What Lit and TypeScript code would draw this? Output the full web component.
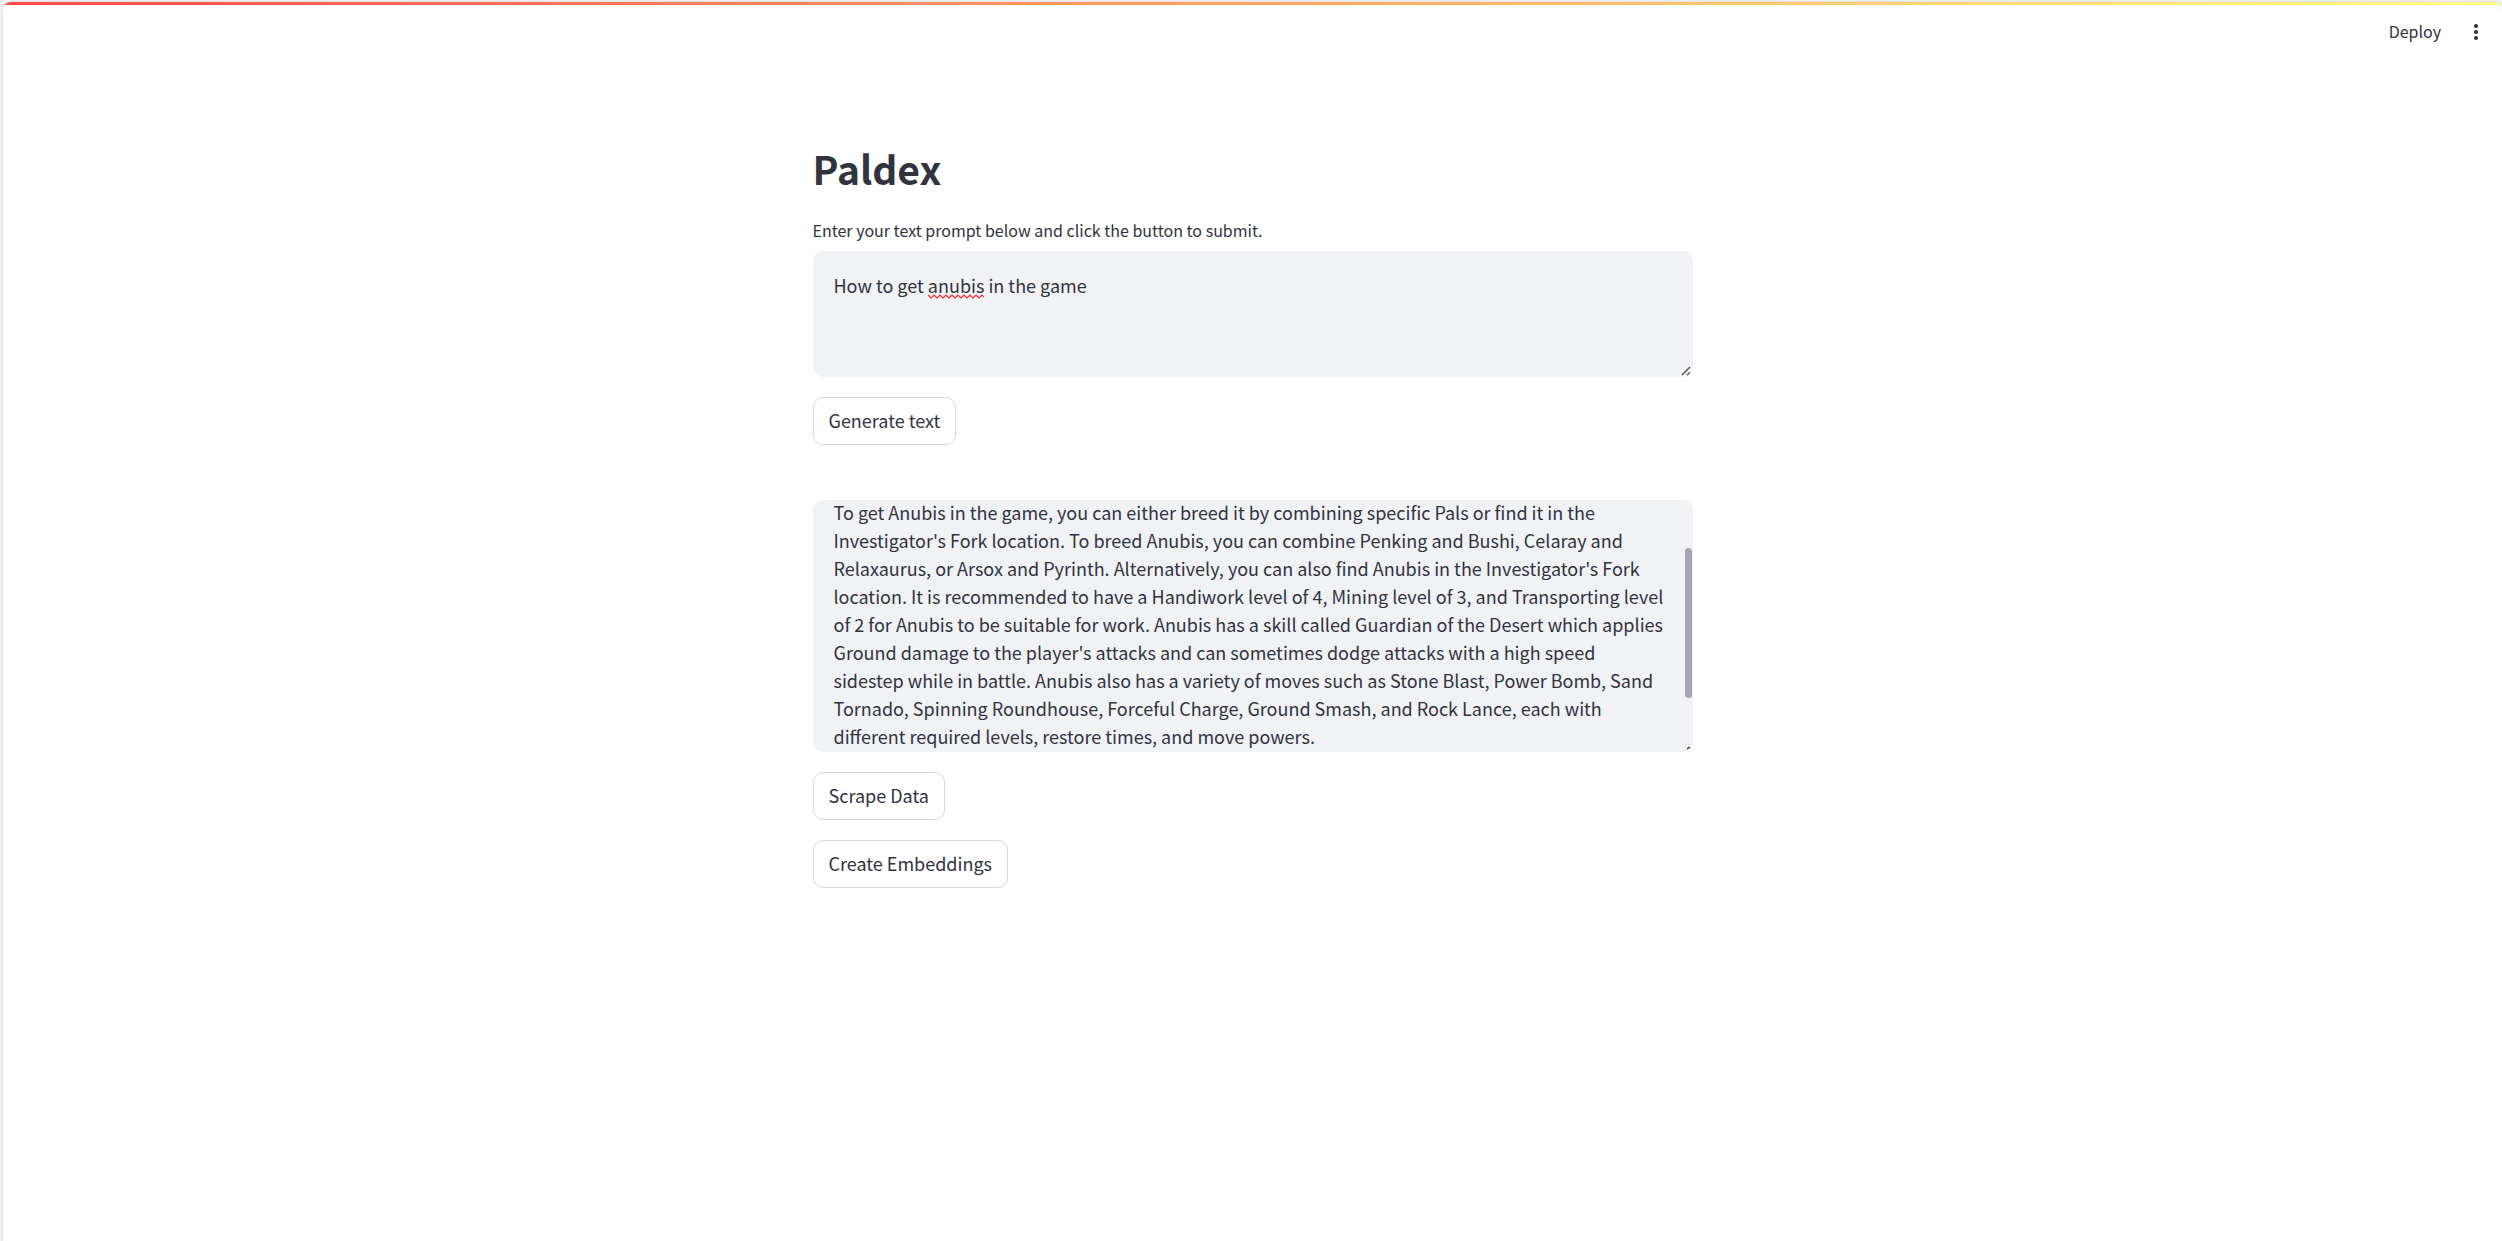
import { LitElement, html, css, svg } from "lit";
import { customElement, property, query } from "lit/decorators.js";

const ANSWER =
  "\n\nTo get Anubis in the game, you can either breed it by combining specific Pals or find it in the Investigator's Fork location. To breed Anubis, you can combine Penking and Bushi, Celaray and Relaxaurus, or Arsox and Pyrinth. Alternatively, you can also find Anubis in the Investigator's Fork location. It is recommended to have a Handiwork level of 4, Mining level of 3, and Transporting level of 2 for Anubis to be suitable for work. Anubis has a skill called Guardian of the Desert which applies Ground damage to the player's attacks and can sometimes dodge attacks with a high speed sidestep while in battle. Anubis also has a variety of moves such as Stone Blast, Power Bomb, Sand Tornado, Spinning Roundhouse, Forceful Charge, Ground Smash, and Rock Lance, each with different required levels, restore times, and move powers.\n\n";

const wave = () => {
  let d = "M0 1";
  for (let x = 3; x <= 57; x += 3) d += ` L${x} ${x % 2 ? 4 : 1}`;
  return svg`<path d=${d} fill="none" stroke="#ff2b2b" stroke-width="1.2" />`;
};

@customElement("answer-box")
export class AnswerBox extends LitElement {
  @property() text = "";
  @query("textarea") private area!: HTMLTextAreaElement;

  static styles = css`
    :host {
      display: block;
      position: relative;
      background: #f0f2f6;
      border-radius: 10px;
      overflow: hidden;
    }
    textarea {
      display: block;
      box-sizing: border-box;
      width: 100%;
      height: 252px;
      margin: 0;
      padding: 20px 28px 20px 21px;
      border: 0;
      outline: 0;
      resize: none;
      background: transparent;
      color: #31333f;
      font: inherit;
      line-height: 28px;
      scrollbar-width: none;
    }
    .thumb {
      position: absolute;
      top: 48px;
      right: 1px;
      width: 7px;
      height: 150px;
      border-radius: 4px;
      background: #a3a4ad;
    }
    .corner {
      position: absolute;
      right: 1px;
      bottom: 1px;
      width: 7px;
      height: 7px;
    }
  `;

  firstUpdated() {
    this.area.scrollTop = 78;
  }

  render() {
    return html`
      <textarea aria-label="Answer" .value=${this.text} readonly></textarea>
      <span class="thumb"></span>
      <svg class="corner" viewBox="0 0 7 7" aria-hidden="true">
        <path d="M0 0H7V4L4 7H0Z" fill="#fff" />
        <path d="M0 7V0H7" fill="none" stroke="#d5d6da" stroke-width="1" />
        <path d="M2 5L5 3" stroke="#46464c" stroke-width="1.6" />
      </svg>
    `;
  }
}

@customElement("app-root")
export class AppRoot extends LitElement {
  static styles = css`
    :host {
      display: flex;
      box-sizing: border-box;
      min-height: 100vh;
      padding: 2px 0 0 3px;
      background: #f5f5f5;
      color: #31333f;
      font-family: "Source Sans Pro", "Noto Sans CJK JP", "Noto Sans", sans-serif;
      font-size: 18px;
      line-height: 28px;
    }
    .panel {
      flex: 1;
      display: flex;
      flex-direction: column;
      background: #fff;
      border-radius: 8px 8px 0 0;
      overflow: hidden;
      box-shadow: 0 0 3px rgba(0, 0, 0, 0.2);
    }
    .decoration {
      height: 3px;
      background: linear-gradient(90deg, #ff4b4b, #fffd80);
    }
    header {
      display: flex;
      justify-content: flex-end;
      align-items: center;
      gap: 20px;
      height: 54px;
      padding-right: 16px;
    }
    button {
      margin: 0;
      border: 0;
      background: #fff;
      color: inherit;
      font: inherit;
      cursor: pointer;
    }
    .deploy {
      padding: 0 5px 2px;
      font-size: 16px;
    }
    .menu {
      display: flex;
      padding: 0;
    }
    main {
      box-sizing: border-box;
      width: 100%;
      max-width: 880px;
      margin: 0 auto;
      padding: 79px 0 40px;
      display: flex;
      flex-direction: column;
      align-items: flex-start;
    }
    h1 {
      margin: 0;
      font-size: 39px;
      line-height: 60px;
      font-weight: 700;
    }
    label {
      margin-top: 18px;
      margin-bottom: 7px;
      font-size: 16px;
      line-height: 28px;
    }
    .prompt {
      position: relative;
      width: 100%;
      border-radius: 10px;
      background: #f0f2f6;
      overflow: hidden;
    }
    .prompt textarea {
      display: block;
      box-sizing: border-box;
      width: 100%;
      height: 126px;
      margin: 0;
      padding: 20px 21px;
      border: 0;
      outline: 0;
      resize: none;
      background: transparent;
      color: inherit;
      font: inherit;
    }
    .squiggle {
      position: absolute;
      left: 115px;
      top: 43px;
    }
    .grip {
      position: absolute;
      right: 2px;
      bottom: 1px;
    }
    .action {
      height: 48px;
      margin-top: 20px;
      padding: 0 15px 2px;
      border: 1px solid #d6d6d9;
      border-radius: 10px;
    }
    answer-box {
      width: 100%;
      margin-top: 55px;
    }
  `;

  render() {
    return html`
      <div class="panel">
        <div class="decoration"></div>
        <header>
          <button class="deploy">Deploy</button>
          <button class="menu" aria-label="Main menu">
            <svg width="20" height="20" viewBox="0 0 20 20" fill="#31333f">
              <circle cx="10" cy="4" r="2.1" />
              <circle cx="10" cy="10" r="2.1" />
              <circle cx="10" cy="16" r="2.1" />
            </svg>
          </button>
        </header>
        <main>
          <h1>Paldex</h1>
          <label for="prompt">Enter your text prompt below and click the button to submit.</label>
          <div class="prompt">
            <textarea id="prompt" spellcheck="false" .value=${"How to get anubis in the game"}></textarea>
            <svg class="squiggle" width="56" height="5" viewBox="0 0 56 5" aria-hidden="true">${wave()}</svg>
            <svg class="grip" width="10" height="10" viewBox="0 0 10 10" aria-hidden="true">
              <path d="M1 9L9 1M6 9L9 6.5" stroke="#55565c" stroke-width="1.5" fill="none" />
            </svg>
          </div>
          <button class="action">Generate text</button>
          <answer-box .text=${ANSWER}></answer-box>
          <button class="action">Scrape Data</button>
          <button class="action">Create Embeddings</button>
        </main>
      </div>
    `;
  }
}
